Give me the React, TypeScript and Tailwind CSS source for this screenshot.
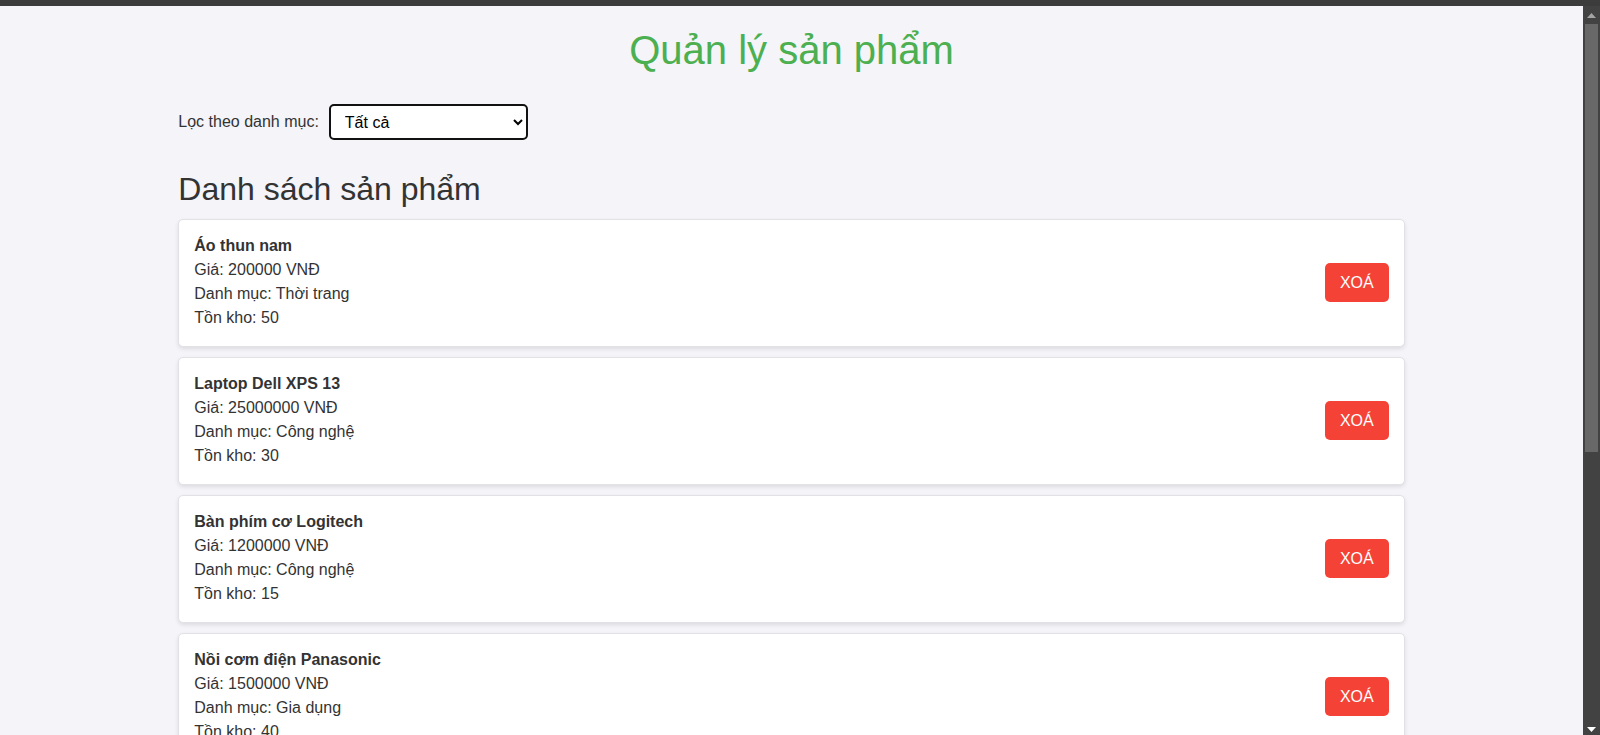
import { useState } from 'react';

interface Product {
  id: number;
  name: string;
  price: number;
  category: string;
  stock: number;
}

const initialProducts: Product[] = [
  { id: 1, name: 'Áo thun nam', price: 200000, category: 'Thời trang', stock: 50 },
  { id: 2, name: 'Laptop Dell XPS 13', price: 25000000, category: 'Công nghệ', stock: 30 },
  { id: 3, name: 'Bàn phím cơ Logitech', price: 1200000, category: 'Công nghệ', stock: 15 },
  { id: 4, name: 'Nồi cơm điện Panasonic', price: 1500000, category: 'Gia dụng', stock: 40 },
];

const categories = ['Thời trang', 'Công nghệ', 'Gia dụng'];

const Scrollbar = () => (
  <div className="w-[17px] bg-[#424242] flex flex-col items-center">
    <svg width="9" height="5" viewBox="0 0 9 5" className="mt-[7px]">
      <path d="M4.5 0L9 5H0z" fill="#a3a3a3" />
    </svg>
    <div className="mt-[6px] w-[13px] h-[428px] bg-[#686868]" />
    <div className="flex-1" />
    <svg width="9" height="5" viewBox="0 0 9 5" className="mb-[3px]">
      <path d="M0 0h9L4.5 5z" fill="#ffffff" />
    </svg>
  </div>
);

const ProductCard = ({ product, onDelete }: { product: Product; onDelete: (id: number) => void }) => (
  <div className="flex items-center justify-between bg-white border border-[#e2e2e6] rounded-[5px] px-[15px] pt-[14px] pb-[16px] mb-[10px] shadow-[0_2px_4px_rgba(0,0,0,0.1)]">
    <div className="leading-6">
      <div className="font-bold">{product.name}</div>
      <div>Giá: {product.price} VNĐ</div>
      <div>Danh mục: {product.category}</div>
      <div>Tồn kho: {product.stock}</div>
    </div>
    <button
      onClick={() => onDelete(product.id)}
      className="bg-[#f44336] text-white text-base leading-[19px] px-[15px] py-[10px] rounded-[5px] cursor-pointer"
    >
      XOÁ
    </button>
  </div>
);

export default function App() {
  const [products, setProducts] = useState<Product[]>(initialProducts);
  const [filter, setFilter] = useState('all');

  const visible = filter === 'all' ? products : products.filter(p => p.category === filter);

  return (
    <div className="h-[735px] flex flex-col overflow-hidden text-[#333] font-['Liberation_Sans',Arial,sans-serif]">
      <div className="h-[6px] bg-[#3c3c3c] shrink-0" />
      <div className="flex flex-1 min-h-0">
        <div className="flex-1 bg-[#f4f4f9] overflow-hidden">
          <div className="w-[80%] mx-auto px-5 pt-[21px]">
            <h1 className="text-[40px] leading-[46px] text-center text-[#4caf50]">Quản lý sản phẩm</h1>

            <div className="flex items-center gap-[10px] mt-[31px]">
              <label className="text-base">Lọc theo danh mục:</label>
              <select
                value={filter}
                onChange={e => setFilter(e.target.value)}
                className="w-[199px] h-[36px] border-2 border-[#111] rounded-[5px] bg-white text-base text-black pl-[10px] pr-1"
              >
                <option value="all">Tất cả</option>
                {categories.map(c => (
                  <option key={c} value={c}>{c}</option>
                ))}
              </select>
            </div>

            <h2 className="text-[32px] leading-[37px] mt-[31px] mb-[11px]">Danh sách sản phẩm</h2>

            <div>
              {visible.map(p => (
                <ProductCard
                  key={p.id}
                  product={p}
                  onDelete={id => setProducts(prev => prev.filter(x => x.id !== id))}
                />
              ))}
            </div>
          </div>
        </div>
        <Scrollbar />
      </div>
    </div>
  );
}
